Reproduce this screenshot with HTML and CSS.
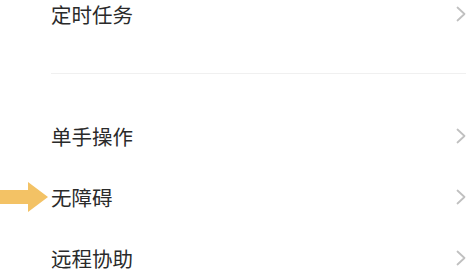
FILE: index.html
```html
<html lang="zh-CN">
<head>
    <meta charset="UTF-8">
    <meta name="viewport" content="width=device-width, initial-scale=1.0">
    <title>设置</title>
    <link rel="stylesheet" href="styles.css">
</head>
<body>
    <div class="settings">
        <div class="group">
            <div class="item">
                <span class="label">定时任务</span>
                <svg class="chevron" width="10" height="16" viewBox="0 0 10 16"><polyline points="1.5,1.5 8.5,8 1.5,14.5"/></svg>
            </div>
        </div>

        <div class="divider"></div>

        <div class="group">
            <div class="item">
                <span class="label">单手操作</span>
                <svg class="chevron" width="10" height="16" viewBox="0 0 10 16"><polyline points="1.5,1.5 8.5,8 1.5,14.5"/></svg>
            </div>
            <div class="item">
                <!-- annotation arrow pointing at this row -->
                <svg class="pointer" width="48" height="30" viewBox="0 0 48 30"><polygon points="0,8 28,8 28,0 48,15 28,30 28,22 0,22"/></svg>
                <span class="label">无障碍</span>
                <svg class="chevron" width="10" height="16" viewBox="0 0 10 16"><polyline points="1.5,1.5 8.5,8 1.5,14.5"/></svg>
            </div>
            <div class="item">
                <span class="label">远程协助</span>
                <svg class="chevron" width="10" height="16" viewBox="0 0 10 16"><polyline points="1.5,1.5 8.5,8 1.5,14.5"/></svg>
            </div>
        </div>
    </div>
</body>
</html>
```

FILE: styles.css
```css
/* settings list */
body {
    margin: 0;
    padding: 0;
    background-color: #ffffff;
    font-family: "Noto Sans CJK SC", "Noto Sans", sans-serif;
    overflow: hidden;
}

.settings {
    margin-top: -17px;
    padding: 0 6px 0 51px;
}

.item {
    position: relative;
    height: 61px;
    display: flex;
    align-items: center;
    justify-content: space-between;
}

.label {
    font-size: 20.5px;
    color: #2a2a2a;
}

.chevron polyline {
    fill: none;
    stroke: #c0c0c0;
    stroke-width: 1.8;
    stroke-linecap: round;
    stroke-linejoin: round;
}

.divider {
    height: 1px;
    background-color: #f0f0f0;
    margin: 29px 0 31px;
}

.pointer {
    position: absolute;
    left: -51px;
    top: 50%;
    transform: translateY(-50%);
}

.pointer polygon {
    fill: #f3c265;
}
```
